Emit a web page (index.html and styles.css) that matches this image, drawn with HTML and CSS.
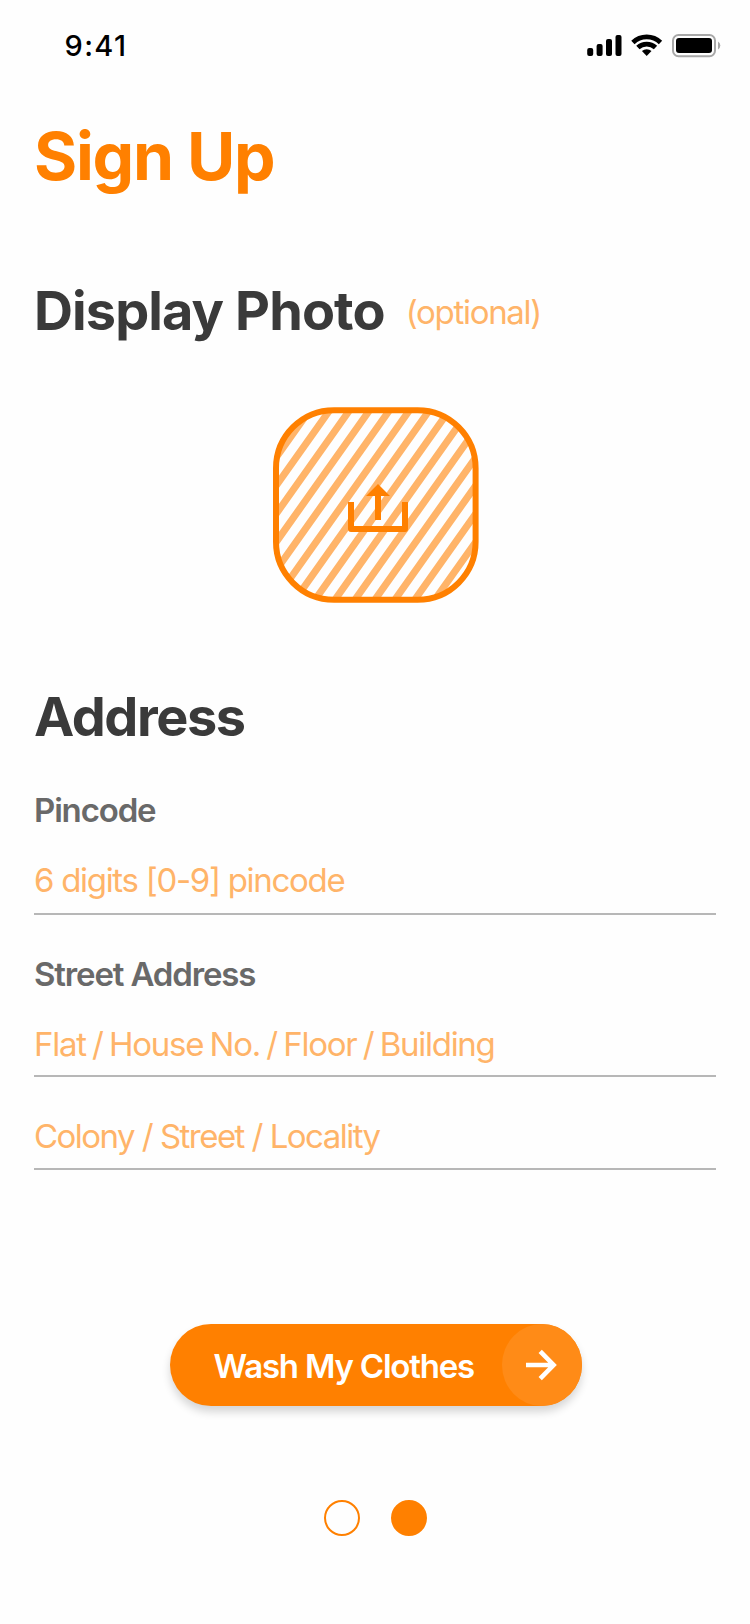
FILE: index.html
```html
<!DOCTYPE html>
<html lang="en">
<head>
<meta charset="utf-8">
<title>Sign Up</title>
<link rel="stylesheet" href="styles.css">
</head>
<body>
<header class="status">
  <span class="time">9:41</span>
  <svg class="status-icons" width="134" height="24" viewBox="587 34 134 24">
    <rect x="587.2" y="48" width="6" height="8" rx="2"/>
    <rect x="596.6" y="44" width="6" height="12" rx="2"/>
    <rect x="606" y="39" width="6" height="17" rx="2"/>
    <rect x="615.5" y="35" width="6" height="21" rx="2"/>
    <g fill="none" stroke="#000" stroke-width="4.8">
      <path d="M632.9 42.4A19.9 19.9 0 0 1 660.5 42.4"/>
      <path d="M637.9 47.6A12.8 12.8 0 0 1 655.5 47.6"/>
    </g>
    <path d="M641.9 51.1A7 7 0 0 1 651.5 51.1L646.7 56Z"/>
    <rect x="673" y="35" width="42" height="21.2" rx="5.5" fill="none" stroke="#a8a8a8" stroke-width="2"/>
    <rect x="676" y="38" width="36" height="15" rx="3"/>
    <path d="M718 41.5A4.6 4.6 0 0 1 718 49.5Z" fill="#a8a8a8"/>
  </svg>
</header>
<main class="page">
  <h1 class="title">Sign Up</h1>
  <div class="photo-head">
    <h2 class="heading display">Display Photo</h2>
    <span class="optional">(optional)</span>
  </div>
  <svg class="photo" width="206" height="196" viewBox="273 407 206 196">
    <defs>
      <clipPath id="frame"><rect x="276" y="410" width="199.6" height="189.6" rx="58"/></clipPath>
    </defs>
    <g clip-path="url(#frame)">
      <path fill="none" stroke="#ffb469" stroke-width="7.1" d="M304.1 390l-163 230M324 390l-163 230M344 390l-163 230M363.9 390l-163 230M383.9 390l-163 230M403.8 390l-163 230M423.8 390l-163 230M443.7 390l-163 230M463.7 390l-163 230M483.6 390l-163 230M503.6 390l-163 230M523.5 390l-163 230M543.5 390l-163 230M563.4 390l-163 230M583.4 390l-163 230M603.3 390l-163 230M623.3 390l-163 230"/>
    </g>
    <rect x="276" y="410.2" width="199.6" height="189.6" rx="58" fill="none" stroke="#ff8000" stroke-width="6"/>
    <path d="M351 502V529H405V502" fill="none" stroke="#ff8000" stroke-width="6" stroke-linejoin="round"/>
    <path d="M378 484L390 496H381V520H375V496H366Z" fill="#ff8000"/>
  </svg>
  <h2 class="heading address">Address</h2>
  <label class="label">Pincode</label>
  <div class="field pin">6 digits [0-9] pincode</div>
  <label class="label street">Street Address</label>
  <div class="field flat">Flat / House No. / Floor / Building</div>
  <div class="field colony">Colony / Street / Locality</div>
  <button class="submit">
    <span class="submit-text">Wash My Clothes</span>
    <span class="submit-arrow">
      <svg width="32" height="32" viewBox="0 0 32 32" fill="none" stroke="#fff" stroke-width="4.6"><path d="M0 16H27M14.2 2.4L27.6 16L14.2 29.6"/></svg>
    </span>
  </button>
  <nav class="dots"><span class="dot"></span><span class="dot on"></span></nav>
</main>
</body>
</html>
```
FILE: styles.css
```css
* { box-sizing: border-box; }

body {
  margin: 0;
  background: #fefefe;
  font-family: Inter, "Liberation Sans", sans-serif;
  color: #3a3a3a;
}

.status {
  display: flex;
  justify-content: space-between;
  height: 90px;
  padding: 34px 29px 0 64.5px;
}

.time {
  font-size: 29px;
  font-weight: 500;
  line-height: 24px;
  letter-spacing: 1.4px;
  color: #000;
}

.page {
  display: flex;
  flex-direction: column;
  padding: 26px 34px 0;
}

.title {
  margin: 0;
  font-size: 66px;
  font-weight: 700;
  line-height: 80px;
  letter-spacing: -1.3px;
  color: #ff8000;
}

.photo-head {
  display: flex;
  align-items: flex-start;
  margin-top: 83px;
}

.heading {
  margin: 0;
  font-size: 54px;
  font-weight: 700;
  line-height: 64px;
}

.display { letter-spacing: -0.9px; }

.address {
  margin: 82px 0 41px;
  letter-spacing: -1.4px;
}

.optional {
  margin: 13px 0 0 21px;
  font-size: 33px;
  line-height: 40px;
  letter-spacing: -1.29px;
  color: #ffb469;
}

.photo {
  align-self: center;
  margin: 64px 0 0 2px;
}

.label {
  font-size: 33px;
  font-weight: 600;
  line-height: 40px;
  letter-spacing: -1.15px;
  color: #696969;
}

.street { margin-top: 39px; }

.field {
  font-size: 33px;
  line-height: 40px;
  color: #ffb469;
  border-bottom: 2px solid #b7b7b7;
}

.pin {
  margin-top: 30px;
  padding-bottom: 13px;
  letter-spacing: -1.3px;
}

.flat {
  margin-top: 30px;
  padding-bottom: 11px;
  letter-spacing: -1.26px;
  word-spacing: -1.7px;
}

.colony {
  margin-top: 39px;
  padding-bottom: 12px;
  letter-spacing: -1.53px;
}

.submit {
  display: flex;
  align-items: center;
  justify-content: space-between;
  align-self: center;
  width: 412px;
  height: 82px;
  margin: 154px 0 0 2px;
  padding: 0 0 0 43.5px;
  border: 0;
  border-radius: 41px;
  background: #ff8000;
  box-shadow: 0 6px 8px rgba(0, 0, 0, 0.16);
  font-family: inherit;
  color: #fff;
}

.submit-text {
  padding-top: 2px;
  font-size: 33px;
  font-weight: 600;
  line-height: 40px;
  letter-spacing: -1.2px;
  white-space: nowrap;
}

.submit-arrow {
  display: flex;
  align-items: center;
  width: 80px;
  height: 82px;
  padding-left: 24px;
  border-radius: 40px / 41px;
  background: #ff8b17;
}

.dots {
  display: flex;
  justify-content: center;
  gap: 31px;
  margin-top: 94px;
}

.dot {
  width: 36px;
  height: 36px;
  border: 2px solid #ff8000;
  border-radius: 50%;
}

.on { background: #ff8000; }
```
